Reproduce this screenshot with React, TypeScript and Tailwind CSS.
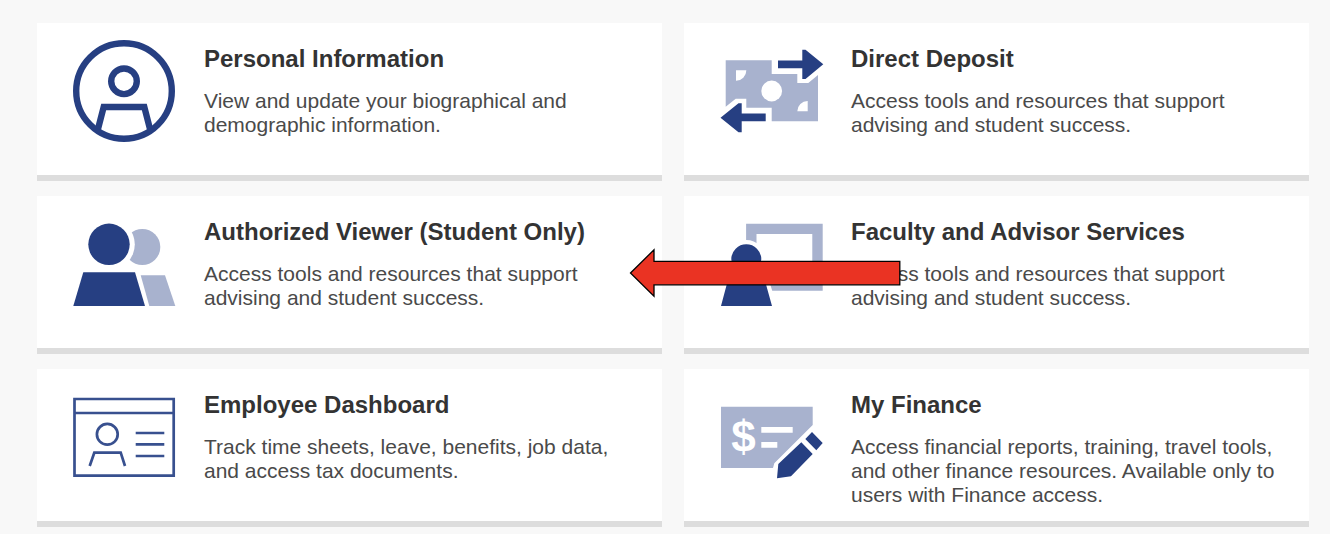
import type { ReactNode } from 'react';

const NAVY = '#263f82';
const MIST = '#a8b2ce';

function IconBox({ children }: { children: ReactNode }) {
  return (
    <svg viewBox="0 0 102 102" className="w-[102px] h-[102px] shrink-0 overflow-visible" fill="none" aria-hidden="true">
      {children}
    </svg>
  );
}

function PersonIcon() {
  return (
    <IconBox>
      <g stroke={NAVY} strokeWidth="6.4">
        <circle cx="51" cy="51" r="47.8" />
        <circle cx="51" cy="41.3" r="12.8" />
        <path d="M25 89 L30.7 67 H71.3 L77 89" />
      </g>
    </IconBox>
  );
}

function DepositIcon() {
  return (
    <IconBox>
      <path fill={MIST} d="M5.7 20.2H51.7V34H77.3V43H88.3L98 35V81.3H51.7V67.7H26.3V58.7H15.7L5.7 66.7Z" />
      <circle cx="51.7" cy="51" r="10.4" fill="#fff" />
      <path fill="#fff" d="M16 30.3H26.3A10.3 10.3 0 0 1 16 40.7ZM87.7 71.3H77.3A10.3 10.3 0 0 1 87.7 61Z" />
      <path fill={NAVY} d="M58 20.5H82.3V9.7H85.5L103.3 24.3L85.5 39H82.3V28.3H58Z" />
      <path fill={NAVY} d="M45.7 73.5H21.7V63.3H18.5L0.5 77.7L18.5 92.3H21.7V81.3H45.7Z" />
    </IconBox>
  );
}

function PeopleIcon() {
  return (
    <IconBox>
      <circle cx="69.3" cy="34" r="18" fill={MIST} />
      <circle cx="36" cy="31.3" r="25.8" fill="#fff" />
      <circle cx="36" cy="31.3" r="20.7" fill={NAVY} />
      <path fill={NAVY} d="M10.3 59.3H62L72 93H0.3Z" />
      <path fill={MIST} d="M67.7 62.3H92L102.3 93H76.3Z" />
    </IconBox>
  );
}

function BoardIcon() {
  return (
    <IconBox>
      <path stroke={MIST} strokeWidth="10.4" d="M31.3 15.9H97.5V72.5H31.3Z" />
      <path fill="#fff" d="M7 46.3A19.3 19.3 0 0 1 45.6 46.3Q45.6 56 46 58L52.3 78H1V46.3Z" />
      <path fill={NAVY} d="M11.3 46.3A15 15 0 0 1 41.3 46.3Q41.3 52 38 57H42L52 93H1L10.6 57H14.6Q11.3 52 11.3 46.3Z" />
    </IconBox>
  );
}

function BadgeIcon() {
  return (
    <IconBox>
      <g stroke="#38508f" strokeWidth="2.7">
        <path d="M1.5 13H100.7V89.7H1.5ZM1.5 27H100.7" />
        <circle cx="34.3" cy="48.3" r="10.4" />
        <path d="M16.7 80 L21.3 66.7 H47.7 L52 80" />
        <path d="M62.7 47H91.3M62.7 58.3H91.3M62.7 70H91.3" />
      </g>
    </IconBox>
  );
}

function FinanceIcon() {
  return (
    <IconBox>
      <path fill={MIST} d="M1 20.7H92.7V39L54.3 77.3L53 82H1Z" />
      <text x="23.5" y="66" textAnchor="middle" fill="#fff" className="text-[44px] font-bold">$</text>
      <path fill="#fff" d="M41.3 41H72.7V46.7H41.3ZM41.3 56H57.3V61.7H41.3Z" />
      <path fill={NAVY} d="M57 92.3L58.3 78L81.3 56.3L92.7 68L71 90.3ZM92 46L102.7 57L96.3 64.3L85.3 53Z" />
    </IconBox>
  );
}

// Callout pointing at the card on its left
function PointerArrow() {
  return (
    <svg viewBox="0 0 272 50" className="absolute z-10 -left-[55px] top-[52px] w-[272px] h-[50px]" aria-hidden="true">
      <path d="M1.5 25 L25 1.8 V13.3 H270.8 V36.8 H25 V48.2 Z" fill="#ea3323" stroke="#000" strokeWidth="1.3" />
    </svg>
  );
}

interface CardItem {
  title: string;
  text: string;
  icon: ReactNode;
  pointer?: boolean;
}

const cards: CardItem[] = [
  { title: 'Personal Information', text: 'View and update your biographical and demographic information.', icon: <PersonIcon /> },
  { title: 'Direct Deposit', text: 'Access tools and resources that support advising and student success.', icon: <DepositIcon /> },
  { title: 'Authorized Viewer (Student Only)', text: 'Access tools and resources that support advising and student success.', icon: <PeopleIcon /> },
  { title: 'Faculty and Advisor Services', text: 'Access tools and resources that support advising and student success.', icon: <BoardIcon />, pointer: true },
  { title: 'Employee Dashboard', text: 'Track time sheets, leave, benefits, job data, and access tax documents.', icon: <BadgeIcon /> },
  { title: 'My Finance', text: 'Access financial reports, training, travel tools, and other finance resources. Available only to users with Finance access.', icon: <FinanceIcon /> },
];

export default function App() {
  return (
    <main className="min-h-screen bg-[#f8f8f8] pt-[23px] pl-[37px] pr-[21px] font-['Liberation_Sans',Arial,sans-serif]">
      <div className="grid grid-cols-2 gap-x-[22px] gap-y-[15px]">
        {cards.map((card) => (
          <div key={card.title} className="relative">
            <a href="#" className="flex h-full min-h-[158px] gap-[29px] bg-white border-b-6 border-[#dddddd] pl-9 pr-5 pt-[17px]">
              {card.icon}
              <div className="pt-[5px]">
                <h2 className="text-[24px] leading-7 font-bold text-[#333333]">{card.title}</h2>
                <p className="mt-4 text-[21px] leading-6 text-[#4a4a4a]">{card.text}</p>
              </div>
            </a>
            {card.pointer && <PointerArrow />}
          </div>
        ))}
      </div>
    </main>
  );
}
